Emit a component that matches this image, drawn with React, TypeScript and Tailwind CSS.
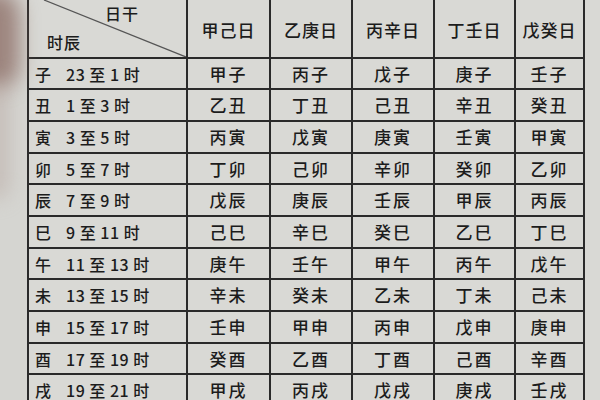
import React from "react";

const rows: [string, string, string[]][] = [
  ["子", "23 至 1 时", ["甲子", "丙子", "戊子", "庚子", "壬子"]],
  ["丑", "1 至 3 时", ["乙丑", "丁丑", "己丑", "辛丑", "癸丑"]],
  ["寅", "3 至 5 时", ["丙寅", "戊寅", "庚寅", "壬寅", "甲寅"]],
  ["卯", "5 至 7 时", ["丁卯", "己卯", "辛卯", "癸卯", "乙卯"]],
  ["辰", "7 至 9 时", ["戊辰", "庚辰", "壬辰", "甲辰", "丙辰"]],
  ["巳", "9 至 11 时", ["己巳", "辛巳", "癸巳", "乙巳", "丁巳"]],
  ["午", "11 至 13 时", ["庚午", "壬午", "甲午", "丙午", "戊午"]],
  ["未", "13 至 15 时", ["辛未", "癸未", "乙未", "丁未", "己未"]],
  ["申", "15 至 17 时", ["壬申", "甲申", "丙申", "戊申", "庚申"]],
  ["酉", "17 至 19 时", ["癸酉", "乙酉", "丁酉", "己酉", "辛酉"]],
  ["戌", "19 至 21 时", ["甲戌", "丙戌", "戊戌", "庚戌", "壬戌"]],
];

const heads = ["甲己日", "乙庚日", "丙辛日", "丁壬日", "戊癸日"];

export default function App() {
  return (
    <div
      className="relative w-[600px] h-[400px] overflow-hidden bg-[#d5d5d1] text-[#1c1c1c]"
      style={{ fontFamily: '"Noto Sans CJK SC", "Noto Sans", sans-serif' }}
    >
      <div className="pl-[27px] pt-0">
        <div className="grid grid-cols-[159px_83px_82px_82px_81px_69px] border-l-2 border-[#2a2a2a] bg-[#d9d9d5] font-medium">
          <div className="relative h-[59px] border-r-2 border-b-2 border-[#2a2a2a]">
            <svg className="absolute inset-0" width="157" height="57" viewBox="0 0 157 57">
              <line x1="15" y1="0" x2="157" y2="57" stroke="#555" strokeWidth="1.3" />
            </svg>
            <span className="absolute left-[76px] top-[1px] text-[16px] tracking-[1px]">日干</span>
            <span className="absolute left-[18px] top-[30px] text-[16px] tracking-[1px]">时辰</span>
          </div>
          {heads.map((h) => (
            <div
              key={h}
              className="h-[59px] pt-[2px] flex items-center justify-center border-r-2 border-b-2 border-[#2a2a2a] text-[17px] tracking-[1px]"
            >
              {h}
            </div>
          ))}
          {rows.map(([b, t, cells], ri) => (
            <React.Fragment key={b}>
              <div
                className={`${ri % 3 === 0 ? "h-[31px]" : "h-[32px]"} flex items-center pl-[6px] border-r-2 border-b-2 border-[#2a2a2a] text-[16px] whitespace-pre`}
              >
                <span>{b}</span>
                <span className="ml-[15px] tracking-[0.5px]">{t}</span>
              </div>
              {cells.map((c, i) => (
                <div
                  key={i}
                  className={`${ri % 3 === 0 ? "h-[31px]" : "h-[32px]"} flex items-center justify-center border-r-2 border-b-2 border-[#2a2a2a] text-[17px] tracking-[2px]`}
                >
                  {c}
                </div>
              ))}
            </React.Fragment>
          ))}
        </div>
      </div>
      <div className="absolute left-[-30px] top-[-10px] w-[50px] h-[100px] rounded-full bg-[#8a6a62] opacity-75 blur-[10px]" />
      <div className="absolute left-[-20px] top-[80px] w-[30px] h-[120px] rounded-full bg-[#b8a8a2] opacity-50 blur-[10px]" />
    </div>
  );
}
